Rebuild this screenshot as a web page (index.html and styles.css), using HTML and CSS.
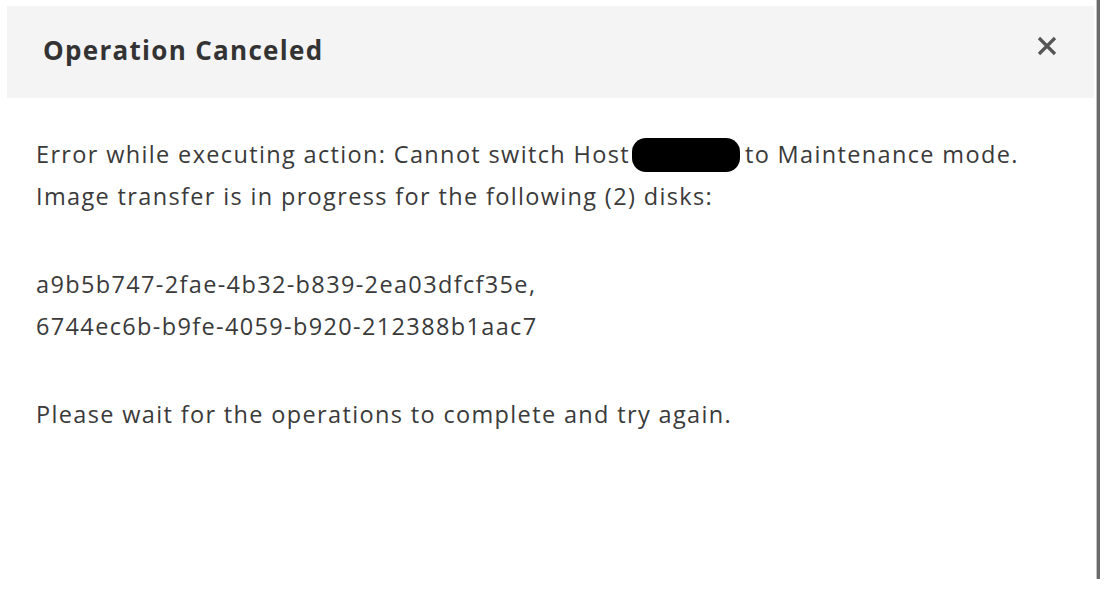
FILE: index.html
```html
<!DOCTYPE html>
<html>
<head>
<meta charset="utf-8">
<link rel="stylesheet" href="styles.css">
</head>
<body>
<div class="frame">
  <div class="dialog">
    <div class="header">
      <h1 class="title">Operation Canceled</h1>
      <button class="close" aria-label="Close">
        <svg width="20" height="20" viewBox="0 0 20 20"><path d="M2 2 L18 18 M18 2 L2 18" stroke="#555" stroke-width="3.2" stroke-linecap="butt"/></svg>
      </button>
    </div>
    <div class="body">
      <p class="para">Error while executing action: Cannot switch Host<span class="redact"></span>to Maintenance mode.<br>Image transfer is in progress for the following (2) disks:</p>
      <p class="para">a9b5b747-2fae-4b32-b839-2ea03dfcf35e,<br>6744ec6b-b9fe-4059-b920-212388b1aac7</p>
      <p class="para">Please wait for the operations to complete and try again.</p>
    </div>
  </div>
  <div class="edge"></div>
</div>
</body>
</html>
```
FILE: styles.css
```css
html, body {
  margin: 0;
  padding: 0;
  background: #ffffff;
}
body {
  font-family: "Open Sans", "Liberation Sans", sans-serif;
  color: #3a3a3a;
}
.frame {
  display: flex;
  height: 579px;
}
.dialog {
  width: 1087px;
  margin-top: 6px;
  margin-left: 7px;
}
.header {
  height: 92px;
  background: #f4f4f4;
  display: flex;
  align-items: center;
  justify-content: space-between;
  padding: 0 36px;
}
.title {
  margin: 0 0 4px 0;
  font-size: 26px;
  font-weight: 700;
  letter-spacing: 1.3px;
  color: #333333;
}
.close {
  border: 0;
  background: none;
  padding: 0;
  margin-right: 1px;
  margin-top: -12px;
  display: flex;
}
.body {
  padding: 35px 29px 0 29px;
}
.para {
  margin: 0 0 46px 0;
  font-size: 23.5px;
  line-height: 42px;
  letter-spacing: 1.35px;
}
.redact {
  display: inline-block;
  width: 108px;
  height: 34px;
  background: #000;
  border-radius: 14px;
  vertical-align: -9px;
  margin: 0 5px 0 2px;
}
.edge {
  width: 3px;
  margin-left: 2px;
  background: #6a6a6a;
  border-left: 1px solid #c4c4c4;
}
```
